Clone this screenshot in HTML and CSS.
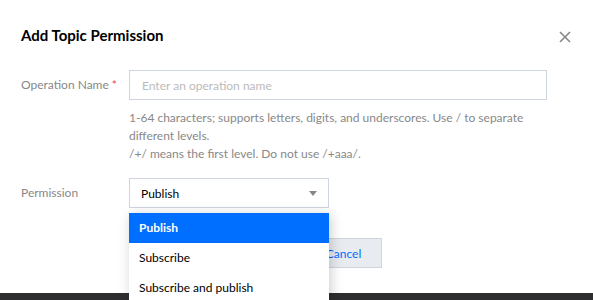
FILE: index.html
```html
<!DOCTYPE html>
<html>
<head>
    <link rel="stylesheet" href="styles.css">
    <title>Add Topic Permission</title>
</head>
<body>
    <div class="dialog">
        <div class="dialog-header">
            <h3 class="dialog-title">Add Topic Permission</h3>
            <button class="close-btn" aria-label="Close">
                <svg width="12" height="12" viewBox="0 0 12 12"><path d="M1 1L11 11M11 1L1 11" stroke="#888" stroke-width="1.6" fill="none"/></svg>
            </button>
        </div>
        <div class="form">
            <div class="form-row">
                <label class="form-label">Operation Name<span class="required">*</span></label>
                <div class="form-control">
                    <input class="text-input" type="text" placeholder="Enter an operation name">
                    <div class="help-text">
                        1-64 characters; supports letters, digits, and underscores. Use / to separate different levels.<br>
                        /+/ means the first level. Do not use /+aaa/.
                    </div>
                </div>
            </div>
            <div class="form-row">
                <label class="form-label">Permission</label>
                <div class="form-control">
                    <div class="select-wrap">
                        <div class="select">
                            <span>Publish</span>
                            <span class="arrow"></span>
                        </div>
                        <ul class="dropdown">
                            <li class="option selected">Publish</li>
                            <li class="option">Subscribe</li>
                            <li class="option">Subscribe and publish</li>
                        </ul>
                    </div>
                </div>
            </div>
        </div>
        <div class="dialog-footer">
            <button class="btn btn-primary">Save</button>
            <button class="btn btn-weak">Cancel</button>
        </div>
    </div>
    <div class="page-bar"></div>
</body>
</html>
```

FILE: styles.css
```css
body {
    margin: 0;
    background-color: white;
    font-family: Lato, "Open Sans", "Liberation Sans", sans-serif;
    font-size: 12px;
    color: #444;
    height: 300px;
    overflow: hidden;
}
.dialog {
    height: 293px;
    padding: 0 21px;
    box-sizing: border-box;
}
.dialog-header {
    display: flex;
    justify-content: space-between;
    align-items: center;
    padding-top: 26px;
    height: 18px;
}
.dialog-title {
    margin: 0;
    font-size: 15px;
    font-weight: bold;
    color: #000;
}
.close-btn {
    background: none;
    border: none;
    padding: 0;
    margin-right: 1px;
    margin-top: 4px;
    width: 12px;
    height: 12px;
    display: flex;
}
.form {
    padding-top: 26px;
}
.form-row {
    display: flex;
    margin-bottom: 15px;
}
.form-label {
    width: 108px;
    flex-shrink: 0;
    line-height: 30px;
    color: #888;
}
.required {
    color: #e54545;
    margin-left: 3px;
}
.form-control {
    flex: 1;
}
.text-input {
    width: 418px;
    height: 30px;
    box-sizing: border-box;
    border: 1px solid #cfd5de;
    padding: 0 12px;
    font-family: inherit;
    font-size: 12px;
    outline: none;
}
.text-input::placeholder {
    color: #bbb;
}
.help-text {
    margin-top: 9px;
    width: 420px;
    line-height: 18px;
    color: #888;
}
.select-wrap {
    position: relative;
    width: 200px;
}
.select {
    height: 30px;
    box-sizing: border-box;
    border: 1px solid #cfd5de;
    padding: 0 11px;
    display: flex;
    align-items: center;
    justify-content: space-between;
    color: #000;
}
.arrow {
    width: 0;
    height: 0;
    border-left: 4px solid transparent;
    border-right: 4px solid transparent;
    border-top: 5px solid #888;
}
.dropdown {
    position: absolute;
    top: 35px;
    left: 0;
    width: 200px;
    margin: 0;
    padding: 0;
    list-style: none;
    background: white;
    box-shadow: 2px 2px 12px rgba(0, 0, 0, 0.2);
    z-index: 10;
}
.option {
    height: 30px;
    line-height: 30px;
    padding-left: 10px;
    color: #000;
}
.option.selected {
    background-color: #006eff;
    color: white;
    font-weight: bold;
}
.dialog-footer {
    display: flex;
    justify-content: center;
    gap: 10px;
    padding-top: 15px;
    padding-left: 8px;
}
.btn {
    height: 30px;
    min-width: 76px;
    padding: 0 18px;
    font-family: inherit;
    font-size: 12px;
    border: 1px solid transparent;
}
.btn-primary {
    background-color: #006eff;
    color: white;
}
.btn-weak {
    background-color: #e8ebf0;
    border-color: #cfd5de;
    color: #006eff;
}
.page-bar {
    height: 7px;
    background-color: #2e2e31;
}
```
